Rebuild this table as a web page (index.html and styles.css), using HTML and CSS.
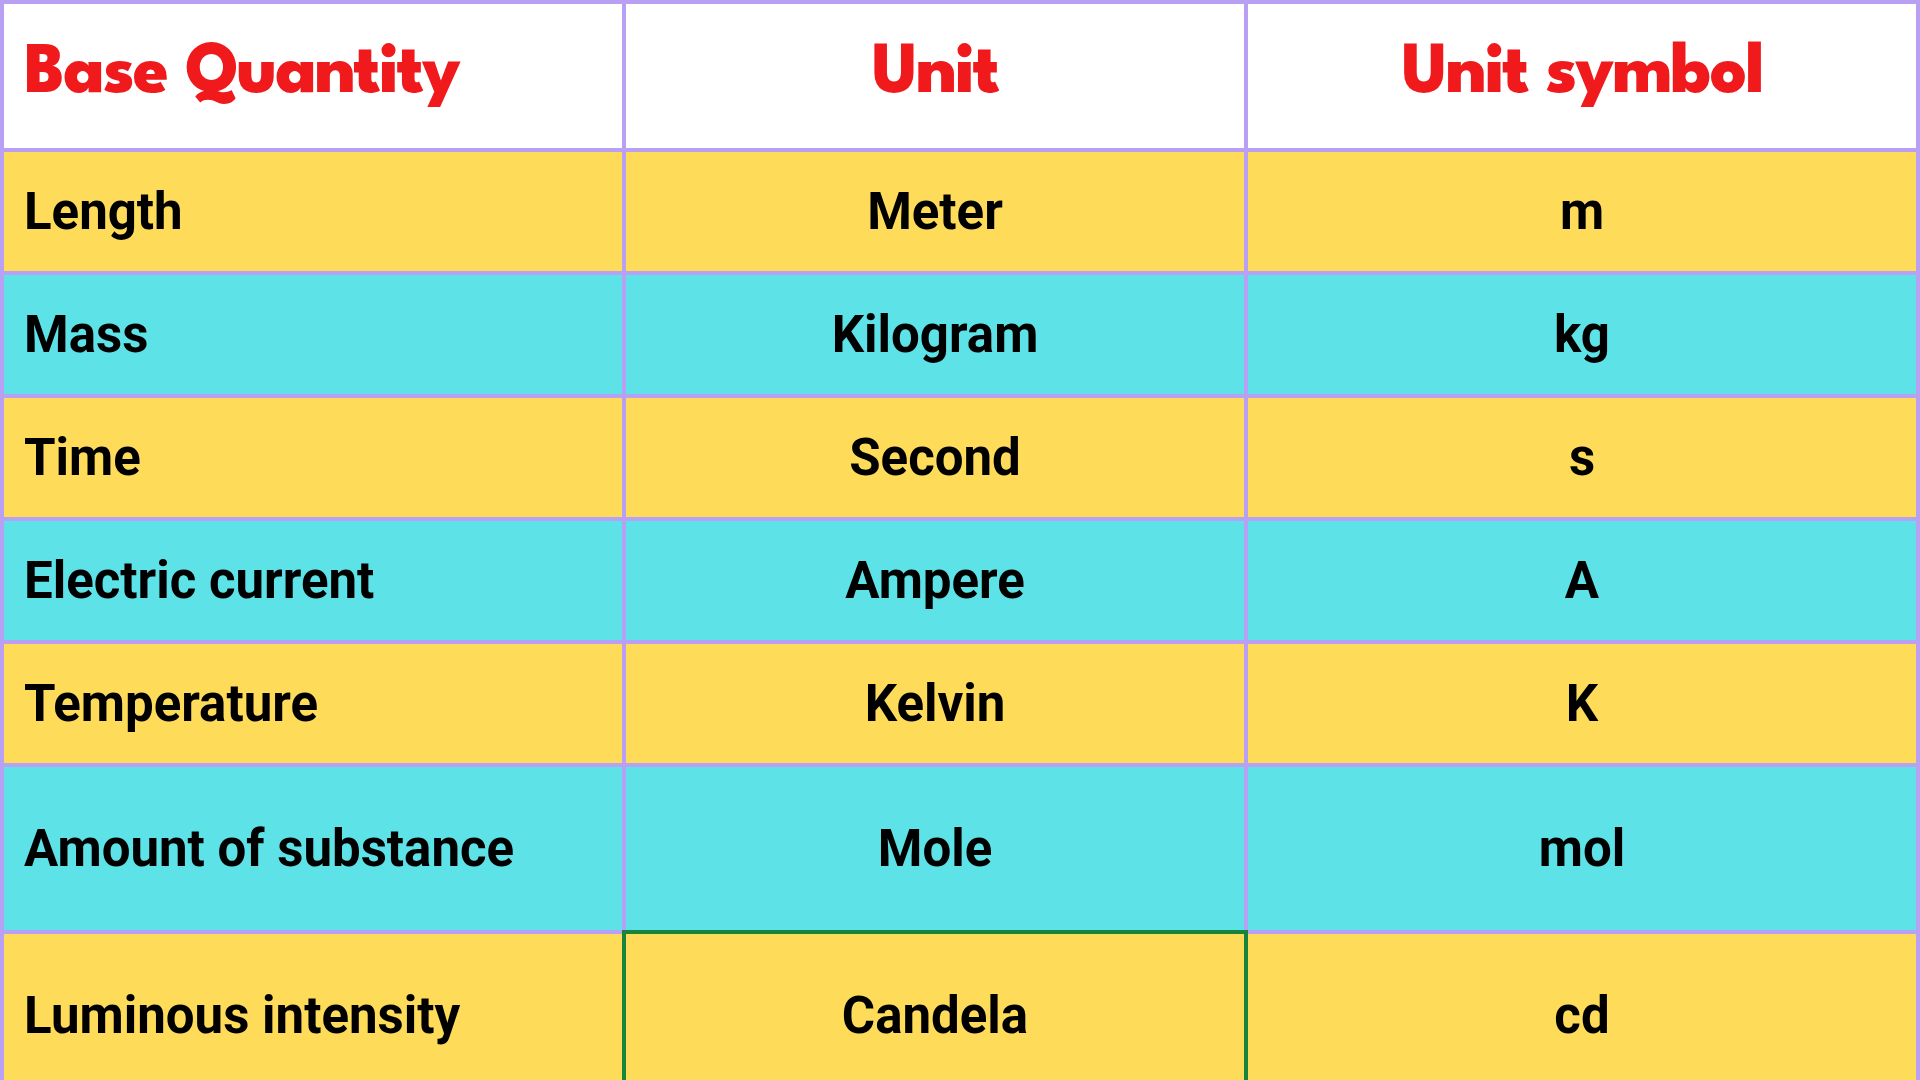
FILE: index.html
```html
<!DOCTYPE html>
<html lang="en">
<head>
<meta charset="utf-8">
<title>SI Base Quantities</title>
<link rel="stylesheet" href="styles.css">
</head>
<body>
<table class="units">
  <colgroup>
    <col class="c1"><col class="c2"><col class="c3">
  </colgroup>
  <thead>
    <tr class="head">
      <th class="left">Base Quantity</th>
      <th>Unit</th>
      <th>Unit symbol</th>
    </tr>
  </thead>
  <tbody>
    <tr class="yellow"><td class="left">Length</td><td>Meter</td><td>m</td></tr>
    <tr class="cyan"><td class="left">Mass</td><td>Kilogram</td><td>kg</td></tr>
    <tr class="yellow"><td class="left">Time</td><td>Second</td><td>s</td></tr>
    <tr class="cyan"><td class="left">Electric current</td><td>Ampere</td><td>A</td></tr>
    <tr class="yellow"><td class="left">Temperature</td><td>Kelvin</td><td>K</td></tr>
    <tr class="cyan tall"><td class="left">Amount of substance</td><td>Mole</td><td>mol</td></tr>
    <tr class="yellow tall"><td class="left">Luminous intensity</td><td class="selected">Candela</td><td>cd</td></tr>
  </tbody>
</table>
</body>
</html>
```
FILE: styles.css
```css
html, body {
  margin: 0;
  padding: 0;
  background: #ffffff;
}
body {
  width: 1920px;
  height: 1080px;
  overflow: hidden;
}
.units {
  border-collapse: collapse;
  table-layout: fixed;
  width: 1920px;
  font-family: Roboto, "Liberation Sans", sans-serif;
  font-weight: 700;
  color: #000;
  margin: 0;
}
.c1 { width: 622px; }
.c2 { width: 622px; }
.c3 { width: 672px; }
.units th, .units td {
  border: 4px solid #b8a0f5;
  text-align: center;
  padding: 0 20px;
  white-space: nowrap;
}
.units .left {
  text-align: left;
  padding-left: 20px;
}
.head th {
  height: 142px;
  background: #ffffff;
  color: #f0191c;
  font-family: "League Spartan", Lato, sans-serif;
  font-weight: 800;
  font-size: 72px;
  letter-spacing: -1.8px;
  padding-bottom: 2px;
  padding-top: 0;
}
.units td {
  height: 119px;
  font-size: 51px;
}
.units tr.tall td {
  height: 163px;
}
.yellow td { background: #fedc5a; }
.cyan td { background: #5de2e7; }
.units td.selected {
  outline: 4px solid #17843b;
  outline-offset: -2px;
}
```
